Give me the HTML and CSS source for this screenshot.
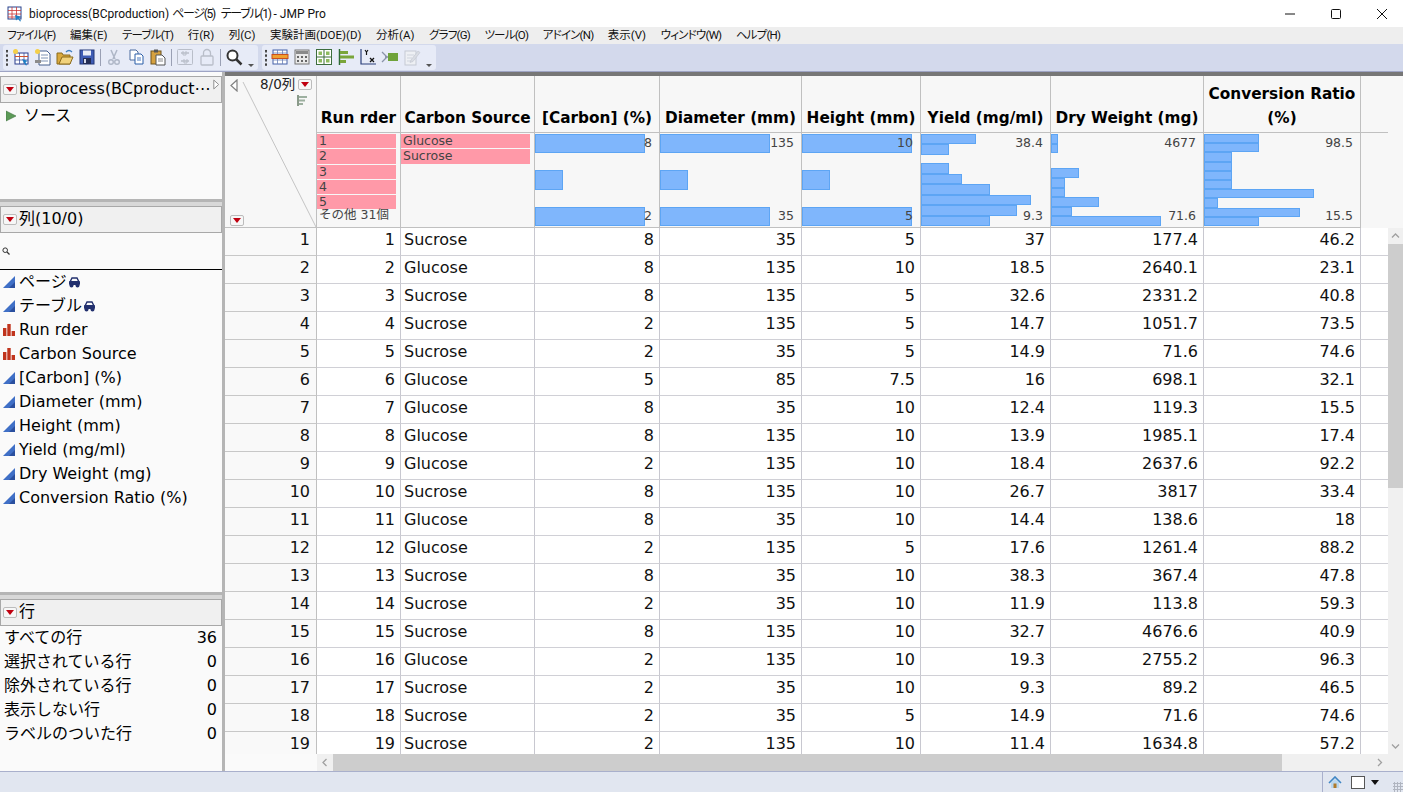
FILE: index.html
```html
<!DOCTYPE html>
<html lang="ja">
<head>
<meta charset="utf-8">
<title>bioprocess(BCproduction) ページ(5) テーブル(1) - JMP Pro</title>
<link rel="stylesheet" href="styles.css">
</head>
<body>
<div class="app">
  <header class="titlebar">
    <svg class="appicon" viewBox="0 0 16 16"><rect x="1" y="1" width="13" height="12" fill="#fff" stroke="#27408b"/><path d="M1 4.500h13M1 8h13M1 11h13M5 1v12M9.500 1v12" stroke="#c33" stroke-width=".8"/><path d="M8 9l7 2-3 1 2 3-1 .5-2-3-2 2z" fill="#1c7fc4"/></svg>
    <span class="titletext">bioprocess(BCproduction) <span class="kana-t">ページ(5)</span>&nbsp; <span class="kana-t">テーブル(1)</span> - JMP Pro</span>
    <div class="winctl">
      <svg viewBox="0 0 12 12"><path d="M1 6h10" stroke="#111"/></svg>
      <svg viewBox="0 0 12 12"><rect x="1.500" y="1.500" width="9" height="9" rx="1" fill="none" stroke="#111"/></svg>
      <svg viewBox="0 0 12 12"><path d="M1 1l10 10M11 1L1 11" stroke="#111"/></svg>
    </div>
  </header>
  <nav class="menubar">
    <span class="kana">ファイル(F)</span><span>編集(E)</span><span class="kana">テーブル(T)</span><span>行(R)</span><span>列(C)</span><span>実験計画(DOE)(D)</span><span>分析(A)</span><span class="kana">グラフ(G)</span><span class="kana">ツール(O)</span><span class="kana">アドイン(N)</span><span>表示(V)</span><span class="kana">ウィンドウ(W)</span><span class="kana">ヘルプ(H)</span>
  </nav>
  <div class="toolbar">
    <div class="tgroup">
      <i class="grip"></i>
      <span class="tool"><svg viewBox="0 0 18 18"><rect x="3" y="5" width="13" height="11" fill="#fff" stroke="#2b3f8f"/><path d="M3 8.500h13M3 12h13M7.500 5v11M12 5v11" stroke="#2b3f8f" stroke-width=".7"/><path d="M3 8h13v1H3z" fill="#d0502a"/><circle cx="3.500" cy="3.500" r="2.500" fill="#f4cf4a"/><path d="M10 11l6 2-2.500 1 1.500 3-1 .5-2-2.500z" fill="#1c7fc4"/></svg></span>
      <span class="tool"><svg viewBox="0 0 18 18"><path d="M5 3h8l3 3v11H5z" fill="#fff" stroke="#46618f"/><path d="M7 7h7M7 10h7M7 13h7" stroke="#7f93b5"/><circle cx="3.500" cy="3.500" r="2.500" fill="#f4cf4a"/><path d="M1 12h6v3H1z" fill="#8c8c8c"/></svg></span>
      <span class="tool"><svg viewBox="0 0 18 18"><path d="M1 5h5l1 2h7v9H1z" fill="#d9a93f" stroke="#8a6a1c"/><path d="M3 16l3-7h11l-3 7z" fill="#f1d27c" stroke="#8a6a1c"/><path d="M10 4c2-2 4-2 6 0" fill="none" stroke="#3f7fc0" stroke-width="1.300"/></svg></span>
      <span class="tool"><svg viewBox="0 0 18 18"><rect x="2" y="2" width="14" height="14" fill="#3e5cb5" stroke="#223777"/><rect x="5" y="2.500" width="8" height="5" fill="#e8ecf7"/><rect x="5" y="10" width="8" height="6" fill="#232d55"/><rect x="6" y="11" width="2" height="4" fill="#d5d9e8"/></svg></span>
      <i class="sep"></i>
      <span class="tool"><svg viewBox="0 0 18 18"><path d="M6 2l4 9M12 2L8 11" stroke="#aeb6c6" stroke-width="1.500"/><circle cx="6" cy="14" r="2.300" fill="none" stroke="#aeb6c6" stroke-width="1.400"/><circle cx="12" cy="14" r="2.300" fill="none" stroke="#aeb6c6" stroke-width="1.400"/></svg></span>
      <span class="tool"><svg viewBox="0 0 18 18"><path d="M3 2h6l2 2v8H3z" fill="#fff" stroke="#4a6a9e"/><path d="M8 6h6l2 2v8H8z" fill="#fff" stroke="#2b5ea8"/><path d="M10 10h4M10 12h4" stroke="#4a7ac0"/></svg></span>
      <span class="tool"><svg viewBox="0 0 18 18"><rect x="2" y="3" width="10" height="13" fill="#d6a13f" stroke="#6e5420"/><rect x="5" y="1.500" width="4" height="3" fill="#555"/><path d="M7 7h6l3 3v7H7z" fill="#fff" stroke="#555"/><path d="M9 11h5M9 13h5" stroke="#888"/></svg></span>
      <i class="sep"></i>
      <span class="tool"><svg viewBox="0 0 18 18"><rect x="1.500" y="1.500" width="15" height="15" rx="1" fill="none" stroke="#b9bec9"/><path d="M5 5h8M5 13h8" stroke="#b9bec9" stroke-width="1.500"/><path d="M7 3v4h3V3M8 11v4h3v-4" fill="none" stroke="#b9bec9"/></svg></span>
      <span class="tool"><svg viewBox="0 0 18 18"><rect x="3" y="8" width="12" height="9" rx="1" fill="none" stroke="#b9bec9" stroke-width="1.300"/><path d="M5.500 8V5a3.500 3.500 0 017 0v3" fill="none" stroke="#b9bec9" stroke-width="1.300"/></svg></span>
      <i class="sep"></i>
      <span class="tool"><svg viewBox="0 0 18 18"><circle cx="7.500" cy="7.500" r="5" fill="#fff" stroke="#333" stroke-width="2"/><path d="M11 11l5.500 5.500" stroke="#333" stroke-width="2.500"/></svg></span>
      <i class="over"></i>
    </div>
    <div class="tgroup">
      <i class="grip"></i>
      <span class="tool"><svg viewBox="0 0 18 18"><rect x="2" y="2" width="14" height="14" fill="#fff" stroke="#4560a8"/><path d="M2 5h14M2 12h14M6.500 2v14M11.500 2v14" stroke="#6a80b8" stroke-width=".8"/><rect x="1" y="6.500" width="16" height="4" fill="#f0a030" stroke="#c9501e"/></svg></span>
      <span class="tool"><svg viewBox="0 0 18 18"><rect x="2" y="2" width="14" height="14" fill="#e9e9e9" stroke="#777"/><rect x="3" y="3" width="12" height="3" fill="#8a8a8a"/><path d="M4 8h2v2H4zM8 8h2v2H8zM12 8h2v2h-2zM4 12h2v2H4zM8 12h2v2H8zM12 12h2v2h-2z" fill="#666"/></svg></span>
      <span class="tool"><svg viewBox="0 0 18 18"><rect x="1.500" y="1.500" width="15" height="15" fill="#fff" stroke="#3c6d3c"/><path d="M9 1.500v15M1.500 9h15" stroke="#3c6d3c"/><path d="M3.500 3.500h3.500v3.500H3.500zM11 3.500h3.500v3.500H11zM3.500 11h3.500v3.500H3.500zM11 11h3.500v3.500H11z" fill="#8dbb5e"/></svg></span>
      <span class="tool"><svg viewBox="0 0 18 18"><path d="M2.500 1v16" stroke="#2e6b35" stroke-width="1.500"/><path d="M3 3h8v3H3zM3 7.500h14v3H3zM3 12h6v3H3z" fill="#7aa53a"/></svg></span>
      <span class="tool"><svg viewBox="0 0 18 18"><path d="M2 1v15h15" fill="none" stroke="#2a3f7a" stroke-width="1.200"/><path d="M6 2l1.500 2L9 2M7.500 4v3" fill="none" stroke="#111" stroke-width="1.200"/><path d="M11 10l4 4M15 10l-4 4" stroke="#111" stroke-width="1.300"/></svg></span>
      <span class="tool"><svg viewBox="0 0 18 18"><rect x="7" y="5" width="10" height="8" fill="#6fa33a"/><path d="M1 4l5 5-5 5M4 9h3" fill="none" stroke="#8a93a8" stroke-width="1.300"/></svg></span>
      <span class="tool"><svg viewBox="0 0 18 18"><rect x="2" y="3" width="11" height="14" fill="#eef0f4" stroke="#c5cad4"/><path d="M4 7h7M4 10h5M4 13h4" stroke="#cfd4dd"/><path d="M8 12l7-9 2 1.500-7 9-3 1z" fill="#d9dce3" stroke="#bfc4ce" stroke-width=".6"/></svg></span>
      <i class="over"></i>
    </div>
  </div>
  <main class="workspace">
    <aside class="sidebar">
      <section class="panel panel-source">
        <h2 class="phead"><i class="redbtn"></i><span>bioprocess(BCproduct⋯</span><svg class="outarrow" viewBox="0 0 8 13"><path d="M1 1l6 5.500L1 12z" fill="#fff" stroke="#8c8c8c" stroke-width="1.200"/></svg></h2>
        <div class="srcrow"><svg class="play" viewBox="0 0 10 12"><path d="M0 1l10 5-10 5z" fill="#5c9a57" stroke="#3f7440" stroke-width=".6"/></svg>ソース</div>
      </section>
      <section class="panel panel-cols">
        <h2 class="phead"><i class="redbtn"></i><span>列(10/0)</span></h2>
        <div class="searchbox"><svg viewBox="0 0 8 8"><circle cx="3.200" cy="3.200" r="2.300" fill="none" stroke="#333" stroke-width="1"/><path d="M5 5l2.500 2.500" stroke="#333" stroke-width="1.300"/></svg></div>
        <ul class="collist">
          <li><svg class="ct" viewBox="0 0 12 12"><path d="M0 12L12 0v12z" fill="#3f6fc6"/><path d="M6 12h6V6z" fill="#2a4f9e"/></svg>ページ<svg class="link" viewBox="0 0 13 11"><path d="M2 5l2-4h5l2 4" fill="none" stroke="#22306e" stroke-width="1.400"/><rect x="1" y="4" width="11" height="4" rx="1" fill="#22306e"/><circle cx="3.500" cy="8.500" r="2" fill="#22306e"/><circle cx="9.500" cy="8.500" r="2" fill="#22306e"/></svg></li>
          <li><svg class="ct" viewBox="0 0 12 12"><path d="M0 12L12 0v12z" fill="#3f6fc6"/><path d="M6 12h6V6z" fill="#2a4f9e"/></svg>テーブル<svg class="link" viewBox="0 0 13 11"><path d="M2 5l2-4h5l2 4" fill="none" stroke="#22306e" stroke-width="1.400"/><rect x="1" y="4" width="11" height="4" rx="1" fill="#22306e"/><circle cx="3.500" cy="8.500" r="2" fill="#22306e"/><circle cx="9.500" cy="8.500" r="2" fill="#22306e"/></svg></li>
          <li><svg class="ct" viewBox="0 0 12 12"><path d="M0 4h3.400v8H0zM4.300 0h3.400v12H4.300zM8.600 7H12v5H8.600z" fill="#c0341d"/></svg>Run rder</li>
          <li><svg class="ct" viewBox="0 0 12 12"><path d="M0 4h3.400v8H0zM4.300 0h3.400v12H4.300zM8.600 7H12v5H8.600z" fill="#c0341d"/></svg>Carbon Source</li>
          <li><svg class="ct" viewBox="0 0 12 12"><path d="M0 12L12 0v12z" fill="#3f6fc6"/><path d="M6 12h6V6z" fill="#2a4f9e"/></svg>[Carbon] (%)</li>
          <li><svg class="ct" viewBox="0 0 12 12"><path d="M0 12L12 0v12z" fill="#3f6fc6"/><path d="M6 12h6V6z" fill="#2a4f9e"/></svg>Diameter (mm)</li>
          <li><svg class="ct" viewBox="0 0 12 12"><path d="M0 12L12 0v12z" fill="#3f6fc6"/><path d="M6 12h6V6z" fill="#2a4f9e"/></svg>Height (mm)</li>
          <li><svg class="ct" viewBox="0 0 12 12"><path d="M0 12L12 0v12z" fill="#3f6fc6"/><path d="M6 12h6V6z" fill="#2a4f9e"/></svg>Yield (mg/ml)</li>
          <li><svg class="ct" viewBox="0 0 12 12"><path d="M0 12L12 0v12z" fill="#3f6fc6"/><path d="M6 12h6V6z" fill="#2a4f9e"/></svg>Dry Weight (mg)</li>
          <li><svg class="ct" viewBox="0 0 12 12"><path d="M0 12L12 0v12z" fill="#3f6fc6"/><path d="M6 12h6V6z" fill="#2a4f9e"/></svg>Conversion Ratio (%)</li>
        </ul>
      </section>
      <section class="panel panel-rows">
        <h2 class="phead"><i class="redbtn"></i><span>行</span></h2>
        <dl class="stats">
          <div><dt>すべての行</dt><dd>36</dd></div>
          <div><dt>選択されている行</dt><dd>0</dd></div>
          <div><dt>除外されている行</dt><dd>0</dd></div>
          <div><dt>表示しない行</dt><dd>0</dd></div>
          <div><dt>ラベルのついた行</dt><dd>0</dd></div>
        </dl>
      </section>
    </aside>
    <div class="gridarea">
      <div class="gridmain">
        <div class="tablewrap">
          <table class="dt">
            <colgroup><col class="c0"><col class="c1"><col class="c2"><col class="c3"><col class="c4"><col class="c5"><col class="c6"><col class="c7"><col class="c8"><col></colgroup>
            <thead>
              <tr class="names">
                <th class="corner" rowspan="2">
                  <svg class="diag" viewBox="0 0 92 152"><path d="M18 6l73 145" stroke="#c4c4c4"/></svg>
                  <svg class="backarrow" viewBox="0 0 8 13"><path d="M7 1L1 6.500 7 12z" fill="#fff" stroke="#808080" stroke-width="1.200"/></svg>
                  <span class="colcount">8/0列</span><i class="redbtn cornerbtn"></i>
                  <svg class="sorticon" viewBox="0 0 11 11"><path d="M0 0h2v11H0z" fill="#8a9a8a"/><path d="M2 1h8v2H2zM2 4.500h6v2H2zM2 8h4v2H2z" fill="#9db0a0"/></svg>
                  <i class="redbtn cornerbtn2"></i>
                </th>
                <th>Run rder</th><th>Carbon Source</th><th>[Carbon] (%)</th><th>Diameter (mm)</th><th>Height (mm)</th><th>Yield (mg/ml)</th><th>Dry Weight (mg)</th><th>Conversion Ratio (%)</th><th class="blank"></th>
              </tr>
              <tr class="summary">
                <td><div class="levels"><b>1</b><b>2</b><b>3</b><b>4</b><b>5</b><em>その他 31個</em></div></td>
                <td><div class="levels wide"><b>Glucose</b><b>Sucrose</b></div></td>
                <td><div class="hist"><i class="bar" style="width:110px"></i><i></i><i class="bar" style="width:28px"></i><i></i><i class="bar" style="width:110px"></i><span class="hi">8</span><span class="lo">2</span></div></td>
                <td><div class="hist"><i class="bar" style="width:110px"></i><i></i><i class="bar" style="width:28px"></i><i></i><i class="bar" style="width:110px"></i><span class="hi">135</span><span class="lo">35</span></div></td>
                <td><div class="hist"><i class="bar" style="width:110px"></i><i></i><i class="bar" style="width:28px"></i><i></i><i class="bar" style="width:110px"></i><span class="hi">10</span><span class="lo">5</span></div></td>
                <td><div class="hist"><i class="bar" style="width:55px"></i><i class="bar" style="width:28px"></i><i></i><i class="bar" style="width:28px"></i><i class="bar" style="width:41px"></i><i class="bar" style="width:69px"></i><i class="bar" style="width:110px"></i><i class="bar" style="width:96px"></i><i class="bar" style="width:69px"></i><span class="hi">38.4</span><span class="lo">9.3</span></div></td>
                <td><div class="hist"><i class="bar" style="width:7px"></i><i class="bar" style="width:7px"></i><i></i><i></i><i class="bar" style="width:28px"></i><i class="bar" style="width:14px"></i><i class="bar" style="width:14px"></i><i class="bar" style="width:48px"></i><i class="bar" style="width:21px"></i><i class="bar" style="width:110px"></i><span class="hi">4677</span><span class="lo">71.6</span></div></td>
                <td><div class="hist"><i class="bar" style="width:55px"></i><i class="bar" style="width:55px"></i><i class="bar" style="width:28px"></i><i class="bar" style="width:28px"></i><i class="bar" style="width:28px"></i><i class="bar" style="width:28px"></i><i class="bar" style="width:110px"></i><i class="bar" style="width:14px"></i><i class="bar" style="width:96px"></i><i class="bar" style="width:55px"></i><span class="hi">98.5</span><span class="lo">15.5</span></div></td>
                <td class="blank"></td>
              </tr>
            </thead>
            <tbody>
              <tr><th>1</th><td>1</td><td class="s">Sucrose</td><td>8</td><td>35</td><td>5</td><td>37</td><td>177.4</td><td>46.2</td><td></td></tr>
              <tr><th>2</th><td>2</td><td class="s">Glucose</td><td>8</td><td>135</td><td>10</td><td>18.5</td><td>2640.1</td><td>23.1</td><td></td></tr>
              <tr><th>3</th><td>3</td><td class="s">Sucrose</td><td>8</td><td>135</td><td>5</td><td>32.6</td><td>2331.2</td><td>40.8</td><td></td></tr>
              <tr><th>4</th><td>4</td><td class="s">Sucrose</td><td>2</td><td>135</td><td>5</td><td>14.7</td><td>1051.7</td><td>73.5</td><td></td></tr>
              <tr><th>5</th><td>5</td><td class="s">Sucrose</td><td>2</td><td>35</td><td>5</td><td>14.9</td><td>71.6</td><td>74.6</td><td></td></tr>
              <tr><th>6</th><td>6</td><td class="s">Glucose</td><td>5</td><td>85</td><td>7.5</td><td>16</td><td>698.1</td><td>32.1</td><td></td></tr>
              <tr><th>7</th><td>7</td><td class="s">Glucose</td><td>8</td><td>35</td><td>10</td><td>12.4</td><td>119.3</td><td>15.5</td><td></td></tr>
              <tr><th>8</th><td>8</td><td class="s">Glucose</td><td>8</td><td>135</td><td>10</td><td>13.9</td><td>1985.1</td><td>17.4</td><td></td></tr>
              <tr><th>9</th><td>9</td><td class="s">Glucose</td><td>2</td><td>135</td><td>10</td><td>18.4</td><td>2637.6</td><td>92.2</td><td></td></tr>
              <tr><th>10</th><td>10</td><td class="s">Sucrose</td><td>8</td><td>135</td><td>10</td><td>26.7</td><td>3817</td><td>33.4</td><td></td></tr>
              <tr><th>11</th><td>11</td><td class="s">Glucose</td><td>8</td><td>35</td><td>10</td><td>14.4</td><td>138.6</td><td>18</td><td></td></tr>
              <tr><th>12</th><td>12</td><td class="s">Glucose</td><td>2</td><td>135</td><td>5</td><td>17.6</td><td>1261.4</td><td>88.2</td><td></td></tr>
              <tr><th>13</th><td>13</td><td class="s">Sucrose</td><td>8</td><td>35</td><td>10</td><td>38.3</td><td>367.4</td><td>47.8</td><td></td></tr>
              <tr><th>14</th><td>14</td><td class="s">Sucrose</td><td>2</td><td>35</td><td>10</td><td>11.9</td><td>113.8</td><td>59.3</td><td></td></tr>
              <tr><th>15</th><td>15</td><td class="s">Sucrose</td><td>8</td><td>135</td><td>10</td><td>32.7</td><td>4676.6</td><td>40.9</td><td></td></tr>
              <tr><th>16</th><td>16</td><td class="s">Glucose</td><td>2</td><td>135</td><td>10</td><td>19.3</td><td>2755.2</td><td>96.3</td><td></td></tr>
              <tr><th>17</th><td>17</td><td class="s">Sucrose</td><td>2</td><td>35</td><td>10</td><td>9.3</td><td>89.2</td><td>46.5</td><td></td></tr>
              <tr><th>18</th><td>18</td><td class="s">Sucrose</td><td>2</td><td>35</td><td>5</td><td>14.9</td><td>71.6</td><td>74.6</td><td></td></tr>
              <tr><th>19</th><td>19</td><td class="s">Sucrose</td><td>2</td><td>135</td><td>10</td><td>11.4</td><td>1634.8</td><td>57.2</td><td></td></tr>
            </tbody>
          </table>
        </div>
        <div class="vcol">
          <div class="vhead"></div>
          <div class="vscroll">
            <svg class="sarrow" viewBox="0 0 15 16"><path d="M4 9.500l3.500-3.500L11 9.500" fill="none" stroke="#a0a0a0" stroke-width="1.300"/></svg>
            <div class="vthumb"></div>
            <div class="vtrack"></div>
            <svg class="sarrow" viewBox="0 0 15 16"><path d="M4 6.500L7.500 10 11 6.500" fill="none" stroke="#a0a0a0" stroke-width="1.300"/></svg>
          </div>
        </div>
      </div>
      <div class="hscroll">
        <svg class="harrow" viewBox="0 0 16 17"><path d="M9.500 5L6 8.500 9.500 12" fill="none" stroke="#a0a0a0" stroke-width="1.300"/></svg>
        <div class="hthumb"></div>
        <div class="htrack"></div>
        <svg class="harrow" viewBox="0 0 16 17"><path d="M6 5l3.500 3.500L6 12" fill="none" stroke="#a0a0a0" stroke-width="1.300"/></svg>
      </div>
    </div>
  </main>
  <footer class="statusbar">
    <i class="statusdiv"></i>
    <svg class="home" viewBox="0 0 14 13"><path d="M1 7l6-6 6 6" fill="none" stroke="#3f86c4" stroke-width="1.600"/><path d="M3 6.500L7 3l4 3.500V12H3z" fill="#b9d7ef"/><rect x="5.500" y="7.500" width="3" height="4.500" fill="#b07a2a"/></svg>
    <i class="statusbox"></i>
    <i class="statustri"></i>
    <i class="resize"></i>
  </footer>
</div>
</body>
</html>
```
FILE: styles.css
```css
* { box-sizing: border-box; }
html, body { margin: 0; padding: 0; }
body {
  width: 1403px;
  height: 792px;
  overflow: hidden;
  background: #fff;
  color: #000;
  font-family: "DejaVu Sans", "Noto Sans CJK JP", sans-serif;
}
.app { display: flex; flex-direction: column; width: 1403px; height: 792px; }

/* title bar */
.titlebar { display: flex; align-items: center; height: 27px; flex: none; padding-left: 7px; background: #fff; }
.appicon { width: 16px; height: 16px; margin-right: 6px; }
.titletext { font: 12px/16px Roboto, "Noto Sans CJK JP", sans-serif; font-feature-settings: "palt"; color: #111; }
.kana-t { letter-spacing: -1.300px; }
.winctl { display: flex; margin-left: auto; padding-right: 15px; gap: 34px; }
.winctl svg { width: 12px; height: 12px; }

/* menu */
.menubar {
  display: flex; align-items: center; gap: 14.500px; height: 17px; flex: none; padding-left: 7px;
  background: #eeeeee; font: 11.500px/17px Roboto, "Noto Sans CJK JP", sans-serif; font-feature-settings: "palt"; color: #111;
}
.kana { letter-spacing: -.8px; }

/* toolbar */
.toolbar {
  display: flex; align-items: center; gap: 4px; height: 28px; flex: none; padding: 0 0 1px 3px;
  background: #d3d9ec; border-bottom: 1px solid #9ea4c4;
}
.tgroup { display: flex; align-items: center; height: 25px; background: #e7ebf7; border-radius: 3px; }
.grip { width: 7px; height: 17px; background: radial-gradient(circle at 2px 2px, #444 1.200px, transparent 1.400px) 2px 0 / 4px 4.500px repeat-y; }
.tool { display: flex; align-items: center; justify-content: center; width: 22px; height: 22px; }
.tool svg { width: 18px; height: 18px; }
.sep { width: 5px; height: 17px; background: linear-gradient(#9aa0b4, #9aa0b4) center / 1px 100% no-repeat; }
.over { position: relative; width: 13px; height: 25px; }
.over::after {
  content: ""; position: absolute; left: 3px; bottom: 3px; width: 0; height: 0;
  border: 3.500px solid transparent; border-top-color: #555; border-bottom: 0;
  box-shadow: 0 -3px 0 -2px #555;
}

/* layout */
.workspace { display: flex; flex: 1; min-height: 0; }
.sidebar { display: flex; flex-direction: column; width: 225px; flex: none; border-right: 3px solid #b5b5b5; background: #fafafa; }
.panel { display: flex; flex-direction: column; }
.panel-source { height: 127px; padding-top: 4px; }
.panel-cols { height: 393px; padding-top: 4px; border-top: 3px solid #b5b5b5; box-shadow: inset 0 4px 0 #d8d8d8; }
.panel-rows { flex: 1; padding-top: 4px; border-top: 3px solid #b5b5b5; box-shadow: inset 0 4px 0 #d8d8d8; }
.phead {
  display: flex; align-items: center; gap: 2px; height: 27px; flex: none; margin: 0; padding: 0 2px;
  background: #f0f0f0; border: 1px solid #a8a8a8; font-size: 16px; font-weight: 400; line-height: 25px; white-space: nowrap;
}
.phead span { margin-top: -2px; }
.redbtn {
  display: inline-flex; align-items: center; justify-content: center; width: 14px; height: 11px; flex: none;
  background: #f7f7f7; border: 1px solid #bcbcbc; border-radius: 2px;
}
.redbtn::after { content: ""; width: 0; height: 0; border: 4.500px solid transparent; border-top: 5px solid #c00010; border-bottom: 0; }
.outarrow { width: 8px; height: 13px; margin-left: auto; margin-top: -11px; }
.srcrow { display: flex; align-items: center; gap: 8px; height: 24px; margin-top: 1px; padding-left: 6px; font-size: 16px; line-height: 24px; }
.play { width: 10px; height: 12px; }
.searchbox { height: 37px; flex: none; padding: 14px 0 0 2px; border-bottom: 1px solid #000; background: #fafafa; }
.searchbox svg { display: block; width: 8px; height: 8px; }
.collist { margin: 0; padding: 0; list-style: none; }
.collist li { display: flex; align-items: center; height: 24px; padding-left: 3px; font-size: 16px; line-height: 24px; white-space: nowrap; }
.ct { width: 12px; height: 12px; margin-right: 4px; flex: none; }
.link { width: 13px; height: 11px; margin-left: 1px; }
.stats { margin: 0; padding: 0 5px 0 4px; }
.stats div { display: flex; justify-content: space-between; height: 24px; line-height: 24px; font-size: 16px; }
.stats dt, .stats dd { margin: 0; }

/* grid */
.gridarea { display: flex; flex-direction: column; flex: 1; min-width: 0; background: #fafafa; border-top: 4px solid #777; }
.gridmain { display: flex; flex: 1; min-height: 0; }
.tablewrap { width: 1163px; flex: none; overflow: hidden; background: #fff; }
.dt { width: 1163px; table-layout: fixed; border-collapse: separate; border-spacing: 0; font-size: 16px; }
.c0 { width: 92px; } .c1 { width: 84px; } .c2 { width: 134px; } .c3 { width: 125px; }
.c4 { width: 142px; } .c5 { width: 119px; } .c6 { width: 130px; } .c7 { width: 153px; } .c8 { width: 157px; }
.dt td, .dt th { padding: 0; border-right: 1px solid #c8c8d0; border-bottom: 1px solid #d0d0d6; }
.dt td:last-child, .dt th:last-child { border-right: 0; }
.names th {
  height: 57px; vertical-align: bottom; padding-bottom: 2px; background: #f7f7f7; font-size: 15.300px; font-weight: 700; line-height: 24px;
  text-align: center; border-right-color: #c0c0c0; border-bottom-color: #c0c0c0;
}
.names th.blank { border-right: 0; }
.dt .corner { position: relative; background: #f7f7f7; border-right-color: #c0c0c0; border-bottom-color: #c0c0c0; padding: 0; }
.diag { position: absolute; left: 0; top: 0; width: 92px; height: 152px; }
.backarrow { position: absolute; left: 5px; top: 3px; width: 8px; height: 13px; }
.colcount { position: absolute; left: 35px; top: 0; font-size: 13.500px; font-weight: 400; line-height: 16px; color: #222; white-space: nowrap; }
.cornerbtn { position: absolute; left: 73px; top: 3px; }
.cornerbtn2 { position: absolute; left: 5px; bottom: 1px; }
.sorticon { position: absolute; left: 72px; top: 19px; width: 11px; height: 11px; }
.summary td { height: 95px; vertical-align: top; background: #f7f7f7; border-right-color: #c0c0c0; border-bottom-color: #c0c0c0; font-size: 12.500px; color: #444; }
.summary td.blank { border-bottom-color: transparent; }
.levels { display: flex; flex-direction: column; gap: 1px; width: 79px; padding-top: 1px; }
.levels.wide { width: 129px; }
.levels b { height: 14.300px; padding-left: 2px; background: #ff99a8; font-weight: 400; line-height: 14px; color: #444; }
.levels em { margin-top: -3px; padding-left: 2px; font-style: normal; line-height: 15px; white-space: nowrap; }
.hist { position: relative; display: flex; flex-direction: column; height: 93px; padding-top: 1px; }
.hist i { flex: 1 1 0; display: block; min-height: 0; }
.hist .bar { background: #7fb6fc; border: 1px solid #5da5f4; }
.hist span { position: absolute; right: 7px; line-height: 14px; }
.hist .hi { top: 3px; }
.hist .lo { top: 76px; }
.dt tbody td, .dt tbody th { height: 28px; padding: 0 5px 4px 0; font-weight: 400; font-size: 16px; line-height: 23px; text-align: right; color: #111; white-space: nowrap; }
.dt tbody th { padding-right: 6px; background: #f9f9f9; border-right-color: #c0c0c0; border-bottom-color: #c8c8c8; }
.dt tbody td.s { padding: 0 0 4px 3px; text-align: left; }
.vcol { display: flex; flex-direction: column; flex: 1; min-width: 0; }
.vhead { height: 152px; flex: none; background: #f7f7f7; }
.vscroll { display: flex; flex-direction: column; flex: 1; min-height: 0; background: #f0f0f0; }
.sarrow { width: 15px; height: 16px; flex: none; }
.vthumb { height: 244px; flex: none; background: #cdcdcd; }
.vtrack { flex: 1; }
.hscroll { display: flex; align-items: stretch; height: 17px; flex: none; margin-left: 92px; background: #f0f0f0; }
.harrow { width: 16px; height: 17px; flex: none; }
.hthumb { width: 949px; flex: none; background: #cdcdcd; }
.htrack { width: 90px; flex: none; }

/* status */
.statusbar { display: flex; align-items: center; height: 21px; flex: none; padding-left: 1322px; background: #e1e6f0; border-top: 1px solid #a9b0cc; position: relative; }
.statusdiv { width: 1px; height: 20px; background: #a9b0cc; margin-right: 5px; }
.home { width: 14px; height: 13px; margin-right: 9px; }
.statusbox { width: 14px; height: 13px; background: #fff; border: 1px solid #555; margin-right: 6px; }
.statustri { width: 0; height: 0; border: 4px solid transparent; border-top: 5px solid #111; border-bottom: 0; }
.resize { position: absolute; right: 0; bottom: 0; width: 10px; height: 10px; background: radial-gradient(circle, #b0b5c0 1px, transparent 1.200px) 0 0 / 3px 3px; }
```
